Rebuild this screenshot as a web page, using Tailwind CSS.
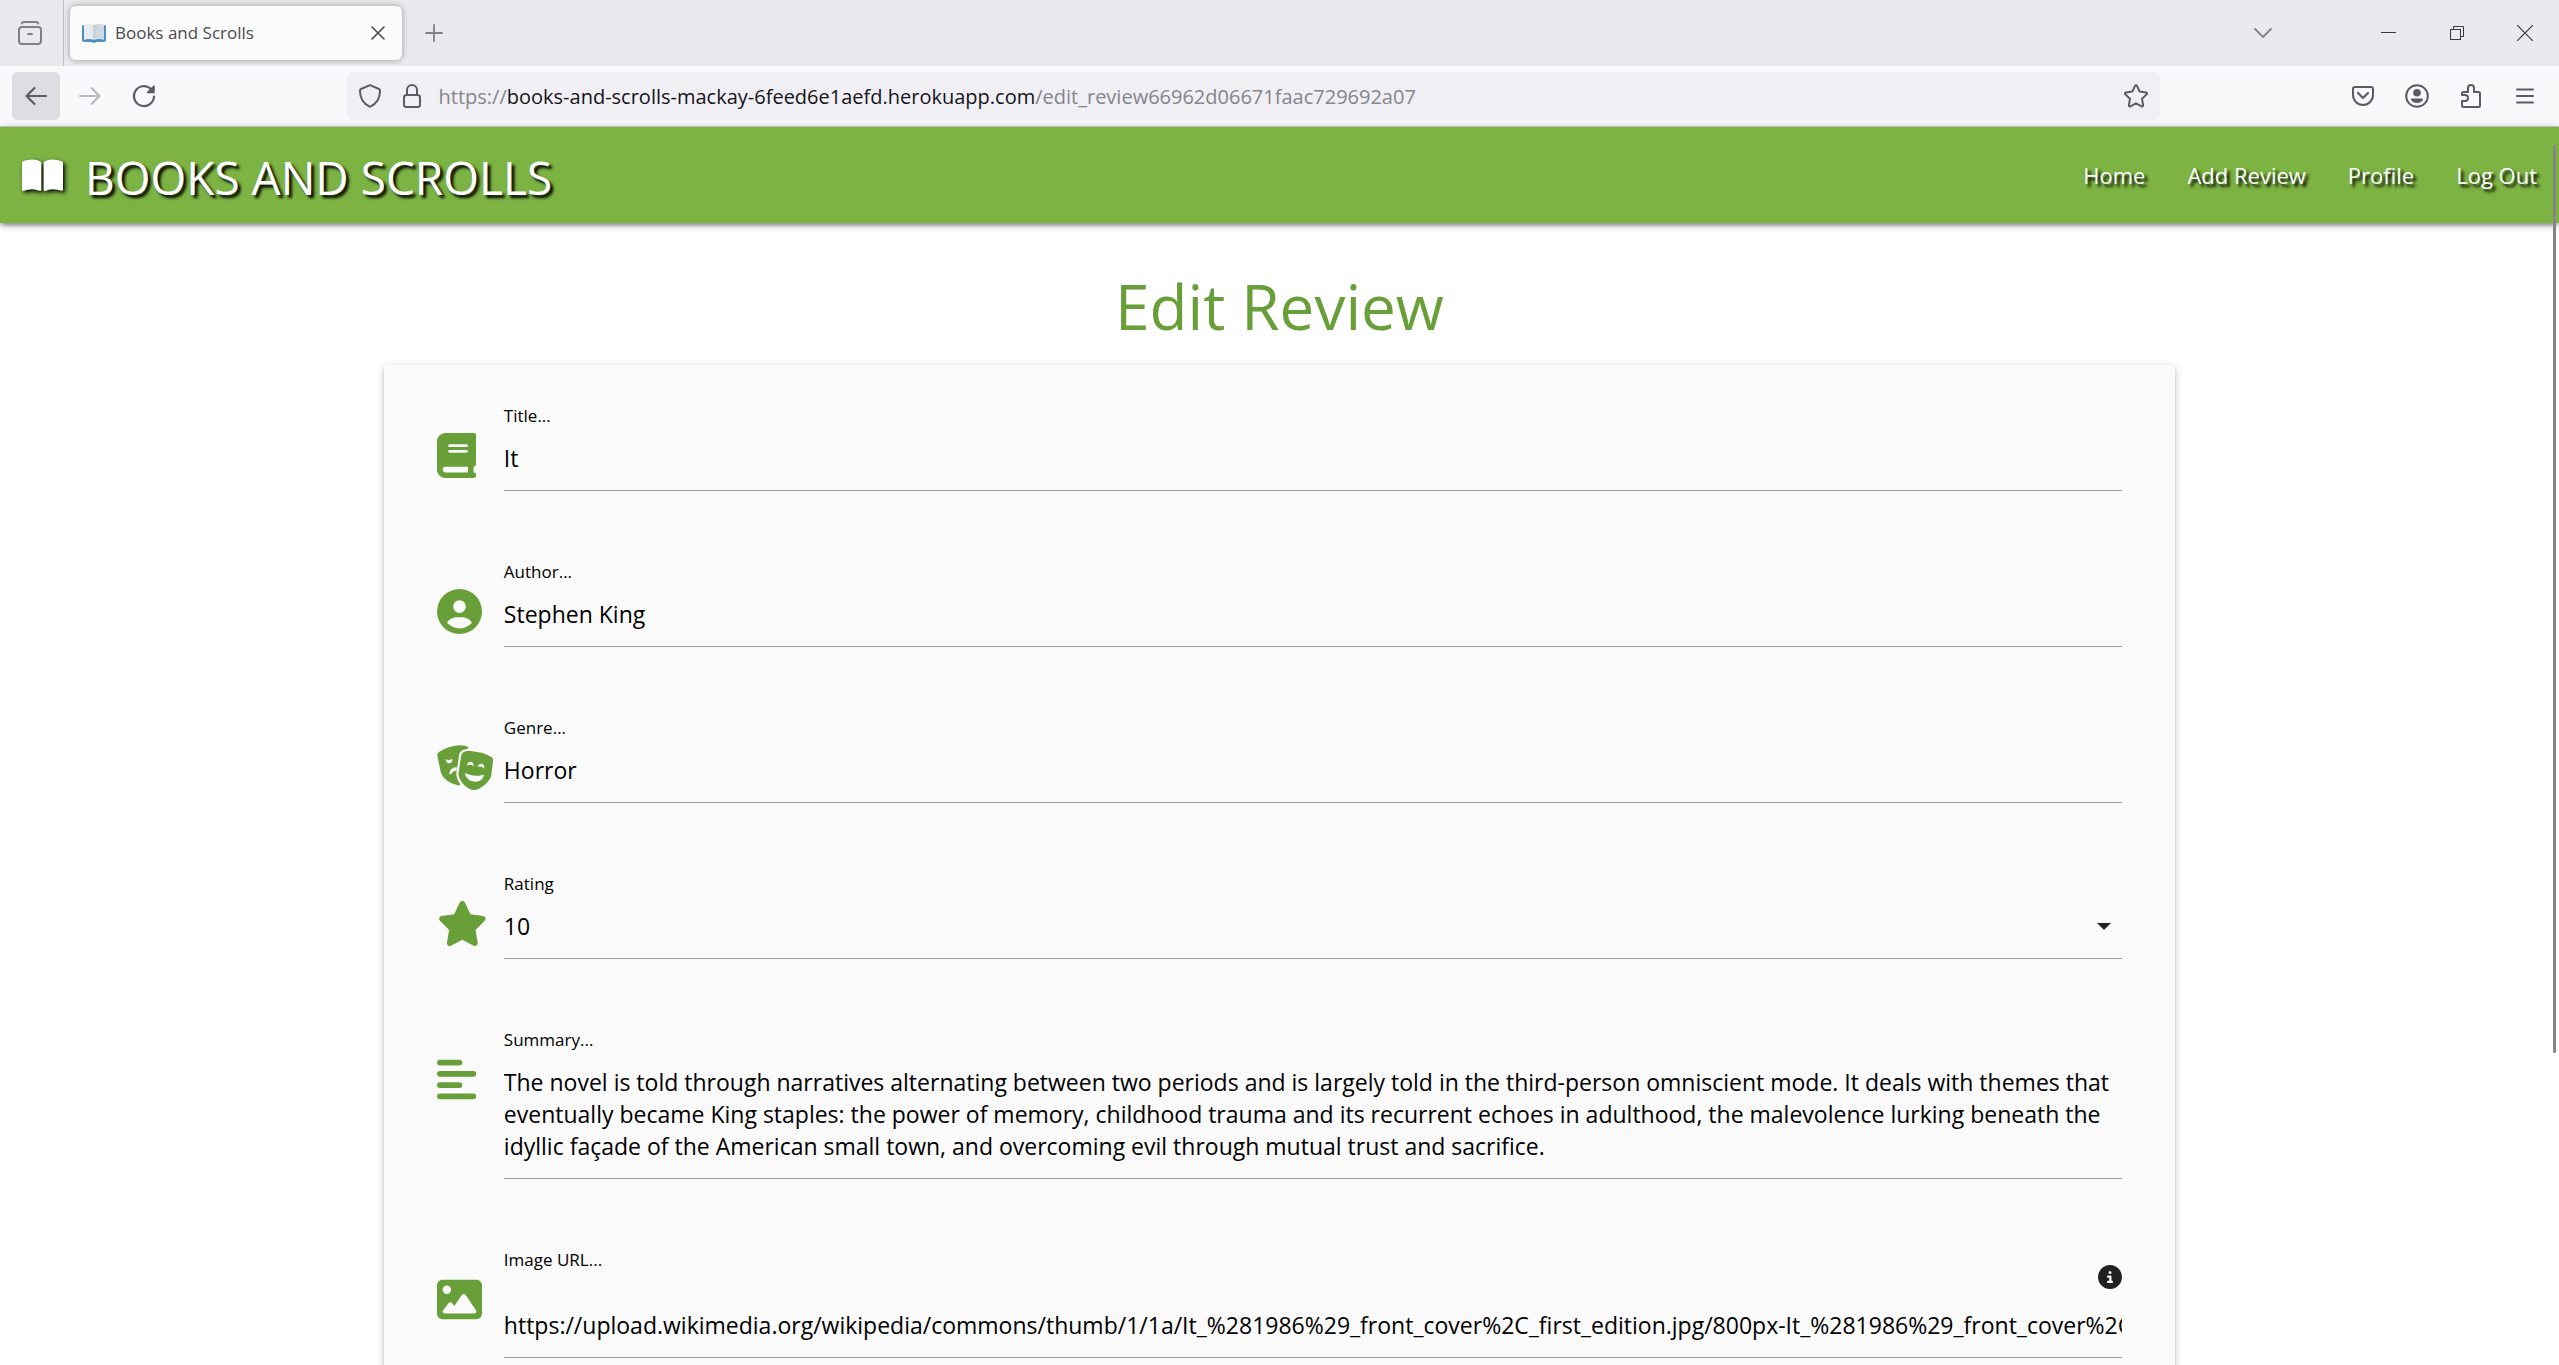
<!DOCTYPE html>
<html lang="en">
<head>
<meta charset="utf-8">
<title>Books and Scrolls</title>
<script src="https://cdn.jsdelivr.net/npm/@tailwindcss/browser@4"></script>
</head>
<body class="relative flex h-screen flex-col overflow-hidden bg-white font-['Open_Sans',sans-serif] text-black">

<!-- Tab strip -->
<div class="flex h-[66px] shrink-0 items-stretch bg-[#eae9ee] text-[#5b5b66]">
  <button type="button" aria-label="View recent browsing" class="flex w-[64px] items-center justify-center border-r border-[#bfbfc5] pr-1 text-[#7f7f88]">
    <svg class="h-6 w-6" viewBox="0 0 24 24" fill="none" stroke="currentColor" stroke-width="2" stroke-linecap="round"><path d="M4 2.500C4 1.500 5 1 6 1h12c1 0 2 .5 2 1.500"/><rect x="1" y="6" width="22" height="17" rx="3"/><path d="M10 13h4"/></svg>
  </button>
  <div class="my-[6px] ml-[6px] flex w-[332px] items-center rounded-md bg-[#fbfbfb] pr-3 pl-3 shadow-[0_0_6px_rgba(0,0,0,0.35)]">
    <svg class="h-6 w-6" viewBox="0 0 24 24"><path d="M0 5.500Q0 4 1.500 4h21Q24 4 24 5.500V19q0 2-2 2h-8q-2 2-4 0H2q-2 0-2-2z" fill="#4f8fbd"/><path d="M2 4q5-3 10 0v15q-5-2-10 0z" fill="#e3eaf0"/><path d="M12 4q5-3 10 0v15q-5-2-10 0z" fill="#cfd8e0"/><path d="M12 4v15" stroke="#b3bfca"/><path d="M4 4v14M7 3v15" stroke="#edf2f6"/></svg>
    <span class="ml-[9px] grow text-[17px] leading-6 text-[#4a4a50]">Books and Scrolls</span>
    <button type="button" aria-label="Close tab" class="flex h-6 w-6 items-center justify-center text-[#4a4a50]">
      <svg class="h-[14px] w-[14px]" viewBox="0 0 14 14" fill="none" stroke="currentColor" stroke-width="1.600" stroke-linecap="round"><path d="M1 1l12 12M13 1L1 13"/></svg>
    </button>
  </div>
  <button type="button" aria-label="New tab" class="ml-2 flex w-12 items-center justify-center text-[#7f7f88]">
    <svg class="h-[18px] w-[18px]" viewBox="0 0 18 18" fill="none" stroke="currentColor" stroke-width="1.800" stroke-linecap="round"><path d="M9 1v16M1 9h16"/></svg>
  </button>
  <div class="grow"></div>
  <button type="button" aria-label="List all tabs" class="mr-[68px] flex w-12 items-center justify-center text-[#7f7f88]">
    <svg class="h-[10px] w-[18px]" viewBox="0 0 18 10" fill="none" stroke="currentColor" stroke-width="1.800" stroke-linecap="round"><path d="M1 1l8 8 8-8"/></svg>
  </button>
  <button type="button" aria-label="Minimize" class="flex w-[68px] items-center justify-center text-[#38383d]">
    <svg class="h-4 w-4" viewBox="0 0 16 16" stroke="currentColor"><path d="M0 7.500h15"/></svg>
  </button>
  <button type="button" aria-label="Restore" class="flex w-[68px] items-center justify-center text-[#38383d]">
    <svg class="h-4 w-4" viewBox="0 0 16 16" fill="none" stroke="currentColor"><rect x="1.500" y="4.500" width="10" height="10"/><path d="M4.500 4.500v-3h10v10h-3"/></svg>
  </button>
  <button type="button" aria-label="Close" class="flex w-[68px] items-center justify-center text-[#38383d]">
    <svg class="h-4 w-4" viewBox="0 0 16 16" fill="none" stroke="currentColor" stroke-width="1.200"><path d="M0 0l16 16M16 0L0 16"/></svg>
  </button>
</div>

<!-- Navigation toolbar -->
<div class="flex h-[61px] shrink-0 items-center border-b border-[#ccccd0] bg-[#f9f9fb] pr-[10px] pl-3 text-[#5b5b66]">
  <div class="flex gap-[6px]">
    <button type="button" aria-label="Back" class="flex h-12 w-12 items-center justify-center rounded-md bg-[#dddee3]">
      <svg class="h-5 w-6" viewBox="0 0 24 20" fill="none" stroke="currentColor" stroke-width="2.200" stroke-linecap="round" stroke-linejoin="round"><path d="M22 10H3M10.500 2L2.500 10l8 8"/></svg>
    </button>
    <button type="button" aria-label="Forward" class="flex h-12 w-12 items-center justify-center text-[#b9b9c0]">
      <svg class="h-5 w-6" viewBox="0 0 24 20" fill="none" stroke="currentColor" stroke-width="2.200" stroke-linecap="round" stroke-linejoin="round"><path d="M2 10h19M13.500 2l8 8-8 8"/></svg>
    </button>
    <button type="button" aria-label="Reload" class="flex h-12 w-12 items-center justify-center">
      <svg class="h-6 w-6" viewBox="0 0 24 24" fill="none" stroke="currentColor" stroke-width="2.200" stroke-linecap="round"><path d="M22 12.500A10 10 0 1 1 18.500 4.500"/><path d="M22 2v6.500h-6.500z" fill="currentColor" stroke-width="1.500" stroke-linejoin="round"/></svg>
    </button>
  </div>
  <div class="flex-1"></div>
  <div class="flex h-12 w-[71.5%] items-center rounded-md bg-[#f0eff4] pr-3 pl-3">
    <svg class="h-6 w-[22px] shrink-0" viewBox="0 0 22 24" fill="none" stroke="currentColor" stroke-width="2" stroke-linejoin="round"><path d="M11 1.200L20 5q1 .5 1 1.800C21 14 17.500 20 11 22.800 4.500 20 1 14 1 6.800Q1 5.500 2 5z"/></svg>
    <svg class="ml-[22px] h-6 w-[18px] shrink-0" viewBox="0 0 18 24" fill="none" stroke="currentColor" stroke-width="2"><rect x="1" y="11" width="16" height="12" rx="2.500"/><path d="M4 11V6a5 5 0 0 1 10 0v5"/></svg>
    <a href="#" class="ml-[18px] grow pt-[2px] text-[20px] leading-8 whitespace-nowrap text-[#85858c]">https://<span class="text-[#15141a]">books-and-scrolls-mackay-6feed6e1aefd.herokuapp.com</span>/edit_review66962d06671faac729692a07</a>
    <button type="button" aria-label="Bookmark this page">
      <svg class="h-6 w-6" viewBox="0 0 24 24" fill="none" stroke="currentColor" stroke-width="2" stroke-linejoin="round"><path d="M11 1.900q1-1.500 2 0l2.700 5.700 6.300.9q1.800.4.600 1.900l-4.600 4.400 1.100 6.300q.1 1.800-1.500 1.200L12 19.300l-5.600 3q-1.600.6-1.500-1.200L6 14.800 1.400 10.400Q.2 8.900 2 8.500l6.300-.9z"/></svg>
    </button>
  </div>
  <div class="flex-1"></div>
  <div class="flex gap-[6px]">
    <button type="button" aria-label="Save to Pocket" class="flex h-12 w-12 items-center justify-center">
      <svg class="h-5 w-[22px]" viewBox="0 0 22 20" fill="none" stroke="currentColor" stroke-width="2" stroke-linecap="round" stroke-linejoin="round"><path d="M3 1h16q2 0 2 2v6a10 10 0 0 1-20 0V3q0-2 2-2z"/><path d="M6 7l5 5 5-5" stroke-width="2.200"/></svg>
    </button>
    <button type="button" aria-label="Account" class="flex h-12 w-12 items-center justify-center">
      <svg class="h-6 w-6" viewBox="0 0 24 24" fill="none" stroke="currentColor" stroke-width="2"><circle cx="12" cy="12" r="10.800"/><circle cx="12" cy="8.800" r="3.800" fill="currentColor" stroke="none"/><path d="M7 14.500h10q1.500 0 1 1.300Q16 19 12 19t-6-3.200q-.5-1.300 1-1.300z" fill="currentColor" stroke="none"/></svg>
    </button>
    <button type="button" aria-label="Extensions" class="flex h-12 w-12 items-center justify-center">
      <svg class="h-6 w-5" viewBox="0 0 20 24" fill="none" stroke="currentColor" stroke-width="2" stroke-linejoin="round"><path d="M7 8V4a3 3 0 0 1 6 0v4h4.500Q19 8 19 9.500v12q0 1.500-1.500 1.500h-15Q1 23 1 21.500V17h3a3 3 0 0 0 0-6H1V9.500Q1 8 2.500 8z"/></svg>
    </button>
    <button type="button" aria-label="Open application menu" class="flex h-12 w-12 items-center justify-center">
      <svg class="h-4 w-[18px]" viewBox="0 0 18 16" fill="none" stroke="currentColor" stroke-width="2" stroke-linecap="round"><path d="M1 1.500h16M1 8h16M1 14.500h16"/></svg>
    </button>
  </div>
</div>

<!-- Site header -->
<header class="z-10 flex h-24 shrink-0 items-center justify-between bg-[#7cb342] pr-[22px] pl-[22px] text-white shadow-[0_3px_3px_rgba(0,0,0,0.14),0_5px_2px_-3px_rgba(0,0,0,0.12),0_2px_8px_rgba(0,0,0,0.3)]">
  <a href="#" class="flex items-center gap-[22px] text-[46px] leading-[60px] [text-shadow:3px_3px_3px_black]">
    <svg class="h-[37px] w-[41px] [filter:drop-shadow(2px_2px_2px_black)]" viewBox="0 0 576 512" fill="currentColor"><path d="M249.600 471.500c10.800 3.800 22.400-4.100 22.400-15.500V78.600c0-4.200-1.600-8.400-5-11C247.400 52 202.400 32 144 32C93.500 32 46.300 45.300 18.100 56.100C6.800 60.500 0 71.700 0 83.800V454.100c0 11.900 12.800 20.200 24.100 16.500C55.600 460.100 105.500 448 144 448c33.900 0 79 14 105.600 23.500zm76.800 0C353 462 398.100 448 432 448c38.500 0 88.400 12.100 119.900 22.600c11.300 3.800 24.100-4.600 24.100-16.500V83.800c0-12.100-6.800-23.300-18.100-27.600C529.700 45.300 482.500 32 432 32c-58.400 0-103.400 20-123 35.600c-3.300 2.600-5 6.800-5 11V456c0 11.400 11.700 19.300 22.400 15.500z"/></svg>
    <span class="pt-1">BOOKS AND SCROLLS</span>
  </a>
  <nav class="flex gap-[42px] text-[22px] leading-8 [text-shadow:3px_3px_3px_black]">
    <a href="#">Home</a>
    <a href="#">Add Review</a>
    <a href="#">Profile</a>
    <a href="#">Log Out</a>
  </nav>
</header>

<!-- Page content -->
<main class="min-h-0 grow overflow-hidden pt-[41px]">
  <h1 class="mb-[17px] text-center text-[62px] leading-[84px] text-[#689f38]">Edit Review</h1>
  <form class="mx-auto flex w-[70%] flex-col gap-[69px] rounded-[3px] bg-[#fafafa] px-[53px] pt-[39px] pb-12 shadow-[0_3px_3px_rgba(0,0,0,0.14),0_5px_2px_-3px_rgba(0,0,0,0.12),0_2px_8px_rgba(0,0,0,0.2)]">

    <div class="flex">
      <div class="w-[67px] shrink-0 pt-[29px] text-[#689f38]">
        <svg class="h-[45px] w-auto" viewBox="0 0 448 512" fill="currentColor"><path d="M96 0C43 0 0 43 0 96V416c0 53 43 96 96 96H384h32c17.700 0 32-14.300 32-32s-14.300-32-32-32V384c17.700 0 32-14.300 32-32V32c0-17.700-14.300-32-32-32H384 96zm0 384H352v64H96c-17.700 0-32-14.300-32-32s14.300-32 32-32zm32-240c0-8.800 7.200-16 16-16H336c8.800 0 16 7.200 16 16s-7.200 16-16 16H144c-8.800 0-16-7.200-16-16zm16 48H336c8.800 0 16 7.200 16 16s-7.200 16-16 16H144c-8.800 0-16-7.200-16-16s7.200-16 16-16z"/></svg>
      </div>
      <div class="flex grow flex-col">
        <label for="title" class="text-[17px] leading-6">Title...</label>
        <input id="title" type="text" value="It" class="h-[63px] w-full border-b border-[#9e9e9e] pb-[2px] text-[23px] outline-none">
      </div>
    </div>

    <div class="flex">
      <div class="w-[67px] shrink-0 pt-[29px] text-[#689f38]">
        <svg class="h-[45px] w-auto" viewBox="0 0 512 512" fill="currentColor"><path d="M399 384.200C376.900 345.800 335.400 320 288 320H224c-47.400 0-88.900 25.800-111 64.200c35.200 39.200 86.200 63.800 143 63.800s107.800-24.700 143-63.800zM0 256a256 256 0 1 1 512 0A256 256 0 1 1 0 256zm256 16a72 72 0 1 0 0-144 72 72 0 1 0 0 144z"/></svg>
      </div>
      <div class="flex grow flex-col">
        <label for="author" class="text-[17px] leading-6">Author...</label>
        <input id="author" type="text" value="Stephen King" class="h-[63px] w-full border-b border-[#9e9e9e] pb-[2px] text-[23px] outline-none">
      </div>
    </div>

    <div class="flex">
      <div class="w-[67px] shrink-0 pt-[29px] text-[#689f38]">
        <svg class="h-[45px] w-auto" viewBox="0 0 640 512" fill="currentColor">
          <path d="M3 112C6 94 16 82 32 74 90 36 170 8 250 2c44-2 84 6 116 30L262 90v370C170 452 56 390 38 290z"/>
          <path d="M96 158q38 26 78-2 6 50-34 52-36-2-44-50zM140 326q4-66 84-76v40q-44 4-60 34-16 16-24 2z" fill="#fafafa"/>
          <path d="M290 92c20-20 55-26 110-22 80 6 160 28 218 66 16 12 23 26 20 46l-22 168c-16 70-126 162-196 162S250 420 244 330l32-212c2-12 6-20 14-26z" stroke="#fafafa" stroke-width="50" fill="#fafafa"/>
          <path d="M290 92c20-20 55-26 110-22 80 6 160 28 218 66 16 12 23 26 20 46l-22 168c-16 70-126 162-196 162S250 420 244 330l32-212c2-12 6-20 14-26z"/>
          <path d="M340 232q10-42 42-42t38 50q-42-28-80-8zM464 250q10-40 42-36t34 54q-38-32-76-18zM318 334q0-18 18-10 90 44 182 16 18-4 14 12-24 66-100 66-86-2-114-84z" fill="#fafafa"/>
        </svg>
      </div>
      <div class="flex grow flex-col">
        <label for="genre" class="text-[17px] leading-6">Genre...</label>
        <input id="genre" type="text" value="Horror" class="h-[63px] w-full border-b border-[#9e9e9e] pb-[2px] text-[23px] outline-none">
      </div>
    </div>

    <div class="flex">
      <div class="w-[67px] shrink-0 pt-[29px] text-[#689f38]">
        <svg class="h-[45px] w-auto" viewBox="0 0 576 512" fill="currentColor"><path d="M316.900 18C311.600 7 300.400 0 288.100 0s-23.400 7-28.800 18L195 150.300 51.400 171.500c-12 1.800-22 10.200-25.700 21.700s-.7 24.200 7.900 32.700L137.800 329 113.200 474.700c-2 12 3 24.200 12.900 31.300s23 8 33.800 2.300l128.300-68.500 128.300 68.500c10.800 5.700 23.900 4.900 33.800-2.300s14.900-19.300 12.900-31.300L438.500 329 542.700 225.900c8.600-8.500 11.700-21.200 7.900-32.700s-13.700-19.900-25.700-21.700L381.200 150.300 316.900 18z"/></svg>
      </div>
      <div class="relative flex grow flex-col">
        <label for="rating" class="text-[17px] leading-6">Rating</label>
        <select id="rating" class="h-[63px] w-full appearance-none border-b border-[#9e9e9e] pb-[2px] text-[23px] outline-none">
          <option>1</option><option>2</option><option>3</option><option>4</option><option>5</option>
          <option>6</option><option>7</option><option>8</option><option>9</option><option selected>10</option>
        </select>
        <svg class="pointer-events-none absolute right-[11px] bottom-[29px] h-[7px] w-[14px]" viewBox="0 0 14 7" fill="#212121"><path d="M0 0h14L7 7z"/></svg>
      </div>
    </div>

    <div class="flex">
      <div class="w-[67px] shrink-0 pt-[29px] text-[#689f38]">
        <svg class="h-[45px] w-auto" viewBox="0 0 448 512" fill="currentColor"><path d="M288 64c0 17.700-14.300 32-32 32H32C14.300 96 0 81.700 0 64S14.300 32 32 32H256c17.700 0 32 14.300 32 32zm0 256c0 17.700-14.300 32-32 32H32c-17.700 0-32-14.300-32-32s14.300-32 32-32H256c17.700 0 32 14.300 32 32zM0 192c0-17.700 14.300-32 32-32H416c17.700 0 32 14.300 32 32s-14.300 32-32 32H32c-17.700 0-32-14.300-32-32zM448 448c0 17.700-14.300 32-32 32H32c-17.700 0-32-14.300-32-32s14.300-32 32-32H416c17.700 0 32 14.300 32 32z"/></svg>
      </div>
      <div class="flex grow flex-col">
        <label for="summary" class="text-[17px] leading-6">Summary...</label>
        <textarea id="summary" rows="3" class="w-full resize-none overflow-hidden border-b border-[#9e9e9e] pt-[14px] pb-4 text-[23px] leading-8 outline-none">The novel is told through narratives alternating between two periods and is largely told in the third-person omniscient mode. It deals with themes that eventually became King staples: the power of memory, childhood trauma and its recurrent echoes in adulthood, the malevolence lurking beneath the idyllic façade of the American small town, and overcoming evil through mutual trust and sacrifice.</textarea>
      </div>
    </div>

    <div class="flex">
      <div class="w-[67px] shrink-0 pt-[29px] text-[#689f38]">
        <svg class="h-[45px] w-auto" viewBox="0 0 512 512" fill="currentColor"><path d="M0 96C0 60.700 28.700 32 64 32H448c35.300 0 64 28.700 64 64V416c0 35.300-28.700 64-64 64H64c-35.300 0-64-28.700-64-64V96zM323.800 202.500c-4.500-6.600-11.900-10.500-19.800-10.500s-15.400 3.900-19.800 10.500l-87 127.600L170.700 297c-4.600-5.700-11.500-9-18.700-9s-14.200 3.300-18.700 9l-64 80c-5.800 7.200-6.900 17.100-2.900 25.400s12.400 13.600 21.600 13.600h96 32H424c8.900 0 17.100-4.900 21.200-12.800s3.600-17.400-1.400-24.700l-120-176zM112 192a48 48 0 1 0 0-96 48 48 0 1 0 0 96z"/></svg>
      </div>
      <div class="flex grow flex-col">
        <div class="flex h-[47px] justify-between">
          <label for="image-url" class="text-[17px] leading-6">Image URL...</label>
          <button type="button" aria-label="Image URL help" class="self-end pb-[6px] text-[#212121]">
            <svg class="h-6 w-6" viewBox="0 0 512 512" fill="currentColor"><path d="M256 512A256 256 0 1 0 256 0a256 256 0 1 0 0 512zM216 336h24V272H216c-13.300 0-24-10.700-24-24s10.700-24 24-24h48c13.300 0 24 10.700 24 24v88h8c13.300 0 24 10.700 24 24s-10.700 24-24 24H216c-13.300 0-24-10.700-24-24s10.700-24 24-24zm40-208a32 32 0 1 1 0 64 32 32 0 1 1 0-64z"/></svg>
          </button>
        </div>
        <input id="image-url" type="text" value="https://upload.wikimedia.org/wikipedia/commons/thumb/1/1a/It_%281986%29_front_cover%2C_first_edition.jpg/800px-It_%281986%29_front_cover%2C_first_edition.jpg" class="h-[63px] w-full border-b border-[#9e9e9e] pb-[2px] text-[23px] outline-none">
      </div>
    </div>
  </form>
</main>

<!-- Overlay scrollbar thumb -->
<div class="absolute top-[145px] right-[3px] z-20 h-[908px] w-[3px] rounded-full bg-[#868686]"></div>
</body>
</html>
